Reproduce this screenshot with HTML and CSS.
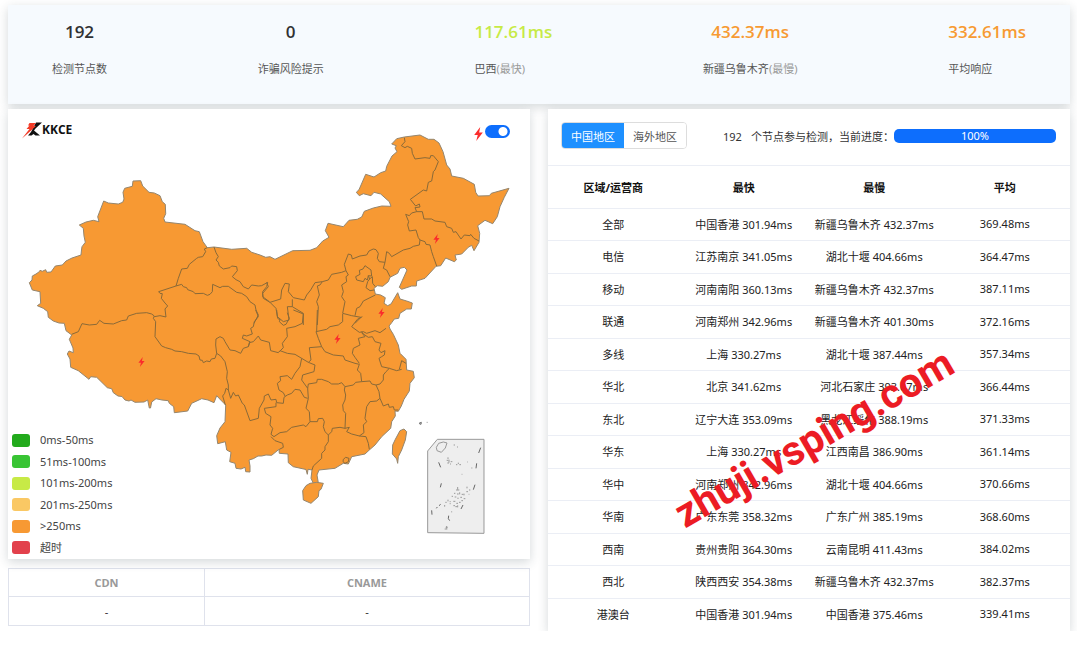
FILE: index.html
```html
<!DOCTYPE html>
<html lang="zh-CN">
<head>
  <meta charset="UTF-8" />
  <meta name="viewport" content="width=device-width, initial-scale=1.0" />
  <title>KKCE</title>
  <link rel="stylesheet" href="styles.css">
</head>
<body>
  <svg width="0" height="0" class="defs">
    <symbol id="bolt" viewBox="0 0 8 13"><path d="M5.6 0 0 7.4h3.3L1.9 13 8 5.2H4.6z" /></symbol>
  </svg>

  <div class="card stats">
    <div class="stat"><div class="value">192</div><div class="label">检测节点数</div></div>
    <div class="stat"><div class="value">0</div><div class="label">诈骗风险提示</div></div>
    <div class="stat"><div class="value lime">117.61ms</div><div class="label">巴西<span>(最快)</span></div></div>
    <div class="stat"><div class="value orange">432.37ms</div><div class="label">新疆乌鲁木齐<span>(最慢)</span></div></div>
    <div class="stat"><div class="value orange">332.61ms</div><div class="label">平均响应</div></div>
  </div>

  <div class="columns">
    <div class="left">
      <div class="card map-card">
        <svg class="map" viewBox="8 109 522 450">
          <path class="land" d="M29.3 282.7 32 280 32.3 276 36 274 39.3 271.7 40 270.3 42.3 271.3 45.7 269.7 46.7 272.3 51 272 55.3 266 62.3 265 66 261 72 258 81 255 81.500 250 82 246.700 85.300 242.300 84 236 83.300 228.300 79.300 225 86 222 93.300 220.300 99 221.700 97.700 216.700 103.700 201 108.300 203 118.300 204 122.700 202.300 124 199 123 192.300 124.700 188.300 132.300 186.300 133 181 140.700 180.700 142.700 186 149 192.300 154.300 193 160 195.700 162.300 201.700 165.300 204.300 165.700 213.700 163.700 218.300 165 222 185 224.300 195 230.700 199.300 231.700 203 241.700 207.300 247.700 214 247 231.700 249.300 246.700 248.300 251.700 252.300 260 255 265.700 257.300 270 256.700 275 259.300 292.700 250.700 310 250.300 316.700 247.700 322.700 241 329 237.300 325.300 230.700 328 223.300 343.300 226.700 349 220.300 357.300 219.300 361.700 217 364.300 211.300 373.300 208 381.700 206 391 206.300 389.300 201.700 380.700 194 374 192.300 371 195.700 363.300 193.700 359.300 195.700 356.300 192.300 359 189.700 365.700 174.300 374 177 380.700 172.700 385.700 171 386.700 166.300 392 156 397 151.700 395 148 396.300 145.700 391.700 144 396.700 138.700 404.300 137 420 135 428.300 139.300 434 139.300 439 143 443 151.700 446.700 165 450 169 451.700 176 463.300 178.300 474.300 184.300 475.700 192.300 478 196 489.300 195.700 491.300 193.300 509 188.300 504.300 197.300 500 206.700 497.300 216.700 492.700 223.700 485 220.300 477.700 225.700 479.700 233.300 479 242.300 474 250.700 471.700 245.300 468.300 247.300 461.700 254 455 255 456.300 260 454.300 261.700 445.700 258 440.700 265.700 436 266.300 425 278.300 416.700 281 416.300 286 411.700 286 401.700 289.300 399.300 287.300 407 270 404.300 267.300 400 268.300 397.700 273.300 390 277.300 388.300 281.700 382.700 286.300 377.300 285.700 374 288.300 375.300 294 380.700 295 385.300 297.700 384 303.300 387.700 305.700 391 304 397.700 292.700 400 299 406.700 301 412.300 303 411.300 309 406.700 309 400 313.300 398.700 318.300 394.300 319 391.700 322.700 389 326 390 329 393.300 334.300 398.300 345 400 353.300 406 359.300 406.700 370 413.300 371.300 414.300 377.700 410 383.300 409.300 391 404 399.300 401.300 406 398.300 411.300 395 411 395.300 416 391.700 421.700 390.700 428.300 381.700 436.700 375 445 369.300 450 365 454 351.700 456.700 348.300 464 343.300 463.300 335 468.300 319 470 317 475 318.300 482.700 313.300 483.300 311 478.300 312 470 308 469.300 307.300 474.300 306 469.500 293.300 466.700 288.300 462.700 288 454 279.300 453.300 279 449.300 271.700 455.300 266 455 261.700 456 258 456 253.300 458.700 249 460 250 466 250 472 245.700 471.700 245 467.300 241 469 236 468.300 235 463.300 229.700 461.700 231 452.300 226.700 450 225.300 441.700 217.700 443.700 216.700 435.700 220 428 225 421.700 225.700 405 220.700 400 216.700 395.700 214 402.700 208 400 201.700 398.700 191.700 403.300 187.700 411 174.300 412.700 173.700 406.700 169.300 403.300 168.300 400.700 162 400 156 398.700 151.700 402 150.500 408 149.300 408 147.700 400 144 402 135 402.300 131 400 129 401 125 400 122 396.500 118 396 113.300 392.700 111.700 388.700 107.300 387.700 96.700 377.300 90.700 376.700 89 379.300 78.300 370.700 70.700 367.300 70 359 67.300 354 69 351 73.300 352.700 73 348 69.300 339.300 71.700 335 66 330.700 64.300 323.300 59 323 53.300 321 48.300 317.300 47.700 311.700 43.300 308.300 37.300 305.700 40.700 303.300 40 291.700 32.300 290z" />

          <!-- 西北 -->
          <g class="border" transform="translate(0 105) scale(.33333)">
            <path d="M622 428 613 432 617 440 608 455 595 457 590 460 568 478 562 490 545 492 535 520 528 543 476 560 480 565 487 566 484 580 495 594 503 603 495 612 498 636 480 632 463 635" />
            <path d="M528 543 545 538 550 545 560 548 563 554 580 560 585 566 610 565 622 571 630 568 637 560 638 538 660 548 668 544 685 544 710 562 725 565 740 575 750 590 765 600 768 615 775 630 762 655" />
            <path d="M642 426 648 443 655 455 648 465 655 472 658 483 670 492 690 488 695 483 710 485 712 497 697 515 708 524 720 530 730 545 745 552 755 540 775 543 785 542 803 532 800 545 788 560 788 575 808 590" />
          </g>

          <!-- 华北、东北 -->
          <g class="border" transform="translate(260 105) scale(.33333)">
            <path d="M20 532 25 545 8 565 10 580 30 592 62 582 65 555 75 535 88 537 85 560 100 578 133 585 140 570 152 555 165 533 187 530 205 525 215 508 245 502 258 497" />
            <path d="M30 592 48 610 52 635 70 650 87 645 82 605 97 605 97 583M97 605 130 625 130 660" />
            <path d="M187 530 180 540 172 543 178 570 170 590 175 605 172 660" />
            <path d="M258 497 265 510 258 515 260 530 245 540 250 560 245 575 255 590 248 625 275 632 303 637 285 655" />
            <path d="M285 632 290 610 300 605 310 588 346 570" />
            <path d="M258 497 253 478 265 447 274 450 277 462 300 453 320 450 327 438 340 432 348 434 355 445 352 460 358 470 375 472 370 490 380 495 390 515" />
            <path d="M375 472 380 440 388 445 395 455 430 435 450 430 460 424 478 420 480 405 495 410 498 418 510 420 515 440 520 455 530 483" />
            <path d="M480 405 475 398 468 375 448 378 443 360 446 350 437 328 448 332 455 324 470 320 465 308 480 306 478 297 467 303 451 283 490 255 500 258 505 232 515 228 520 200 525 195 535 170 520 152 512 152 510 160 495 158 465 162 457 145 455 130 442 124 435 128 424 122 435 110 433 98" />
            <path d="M470 320 487 320 492 342 515 342 525 348 555 352 560 365 575 370 580 382 588 380 603 402 613 390 630 392 632 388 642 400 657 408" />
            <path d="M287 515 300 508 298 496 309 492 315 482 333 495 335 513 325 512 322 525 315 520 310 530 290 525z" />
            <path d="M325 512 329 522 323 530 318 548 330 557 342 555M329 522 337 515 338 535 346 545" />
          </g>

          <!-- 西藏 -->
          <g class="border" transform="translate(0 310) scale(.33333)">
            <path d="M463 18 455 12 440 8 410 10 385 18 380 30 365 32 340 42 312 40 299 31 290 43 268 45 246 41 235 65 215 73" />
            <path d="M463 18 460 25 467 35 465 80 485 108 497 113 515 118 525 123 545 125 565 130 588 132 597 138 600 150 607 151 610 158 620 153 630 155 634 147 645 145 650 130" />
          </g>

          <!-- 南方各省 -->
          <g class="border" transform="translate(200 310) scale(.33333)">
            <path d="M167 0 175 20 163 35 160 50 152 55 157 72 140 78 130 75 127 85 150 95 145 110 130 115 122 130 105 122 90 120 75 95 70 85 60 80 48 87 47 105 50 130 62 138 75 155 82 185 80 205 85 225 85 240 78 235 74 250 68 258 76 285" />
            <path d="M145 110 148 98 160 95 175 78 182 90 208 97 212 122 235 128 240 122 262 130 285 133 305 145 325 157 333 150 328 113 365 110" />
            <path d="M230 0 233 25 240 30 238 35 250 46 258 43 268 25 262 8M280 0 310 12 307 40 285 50 260 55 262 80 247 100 250 113 238 125" />
            <path d="M85 240 92 265 100 247 107 258 115 255 127 280 133 285 150 332 175 325 178 295 192 270 193 258 205 252 213 270 228 268 230 278 250 280 252 262 262 255 275 250 285 238 300 240 313 262 323 265" />
            <path d="M305 145 300 170 285 190 275 208 262 197 240 200 242 212 232 220 237 240 250 248 255 258" />
            <path d="M325 157 345 165 342 185 308 195 305 210 323 235 325 265 318 295 328 305 330 335 318 350 310 345 275 352 260 365 240 368 222 380 213 373 218 355 210 345 213 320 197 310 193 295 228 290 228 278" />
            <path d="M213 380 225 392 248 400 250 412 238 418M330 335 352 335 355 326 368 325 373 335 370 350 375 365 385 375 385 395 375 410 375 420 365 430 365 445 340 468 336 480" />
            <path d="M385 375 395 365 397 355 420 352 435 355 448 352 440 365 455 372 478 378 492 368 490 345 500 335 495 325 500 290 510 275 530 273 540 265 550 288 565 282 568 292 580 290 583 300 595 300" />
            <path d="M323 235 325 222 350 218 352 208 365 208 385 215 395 222 415 222 425 218 435 230 433 240 437 255 435 270 428 285 430 302 437 310 435 355" />
            <path d="M435 230 460 225 467 217 485 215 510 213 515 222 528 225 537 245 540 265M528 225 540 222 550 210 550 195 558 185 568 175 590 182 605 178M598 178 605 152 618 160" />
            <path d="M568 175 545 170 537 145 545 140 553 135 555 122 543 128 537 120 543 100 525 95 517 80 505 82 490 72 485 65" />
            <path d="M455 50 478 67 490 65 500 70 525 62 540 68 558 55M478 378 498 380 505 400 508 418M487 20 472 28 455 50" />
            <path d="M485 68 495 80 475 85 480 105 460 115 457 130 465 142 478 160M365 110 375 125 400 135 430 138 435 150 450 155 465 160 478 163 472 180 482 190 485 215" />
            <path d="M428 12 428 35 415 45 390 50 380 58 348 65 355 85 365 110M352 0 350 65" />
            <path d="M430 448 437 442 447 445 445 455 435 460 429 455z" />
          </g>
          <g class="land" transform="translate(200 310) scale(.33333)">
            <path d="M318 527 330 520 350 517 370 520 363 538 357 542 355 560 333 580 310 570 308 542z" />
            <path d="M600 362 612 357 620 365 616 390 605 420 595 440 593 460 590 447 577 432 578 405 586 388z" />
          </g>

          <!-- 南海诸岛 -->
          <g transform="translate(380 340) scale(.33333)">
            <path class="inset" d="M143 333 172 298H312V580L143 578z" />
            <path class="inset" d="M176 310 190 306 201 309 196 324 184 337 171 332 169 322z" />
            <path class="reef" d="M302 323 296 339M176 367 182 382M290 370 288 385M184 430 181 442M285 434 280 449M155 511 156 524M249 495 243 507M206 527 205 536 209 542M182 493 177 497M172 501 169 505M117 250 124 247 123 253 118 251" />
            <path class="spots" d="M221 315h4M231 321h3M204 352v5M200 361h5M207 359v9M212 365h5M202 369h5M210 372h3M228 374h4M235 368v4M238 374h5M262 366h2M274 384h3M245 403h2M233 441v8M228 450h10M261 440v5M267 450h4M259 455h5M222 460h4M231 462h5M239 457v6M245 463h5M252 461v5M215 469h4M224 471h5M234 473v4M241 472h5M251 476h5M204 479v5M196 487h4M209 485h3M220 484h6M229 490h5M237 487h5M194 495v5M220 497h5M226 500h6M233 496v6M215 514v3M197 562h6M200 558v8M194 567h8M140 247h3M209 491h3M244 482h5M266 463h2" />
          </g>

          <g class="bolt">
            <use href="#bolt" x="433" y="234" width="7" height="10" />
            <use href="#bolt" x="378" y="308" width="7" height="10" />
            <use href="#bolt" x="334" y="334" width="7" height="10" />
            <use href="#bolt" x="138" y="357" width="7" height="10" />
          </g>
        </svg>

        <a class="logo" href="#">
          <svg viewBox="0 0 20 17" width="20" height="17">
            <path class="ink" d="M14 .5h6L13.500 6.500 12 8.500 18 13.500H13.500L11.500 12 9.500 13.500H6L9 10z" />
            <path class="red" d="M7.500 1H14L11.500 4H14L8 9.500 0 16.500 5.500 9.500 7.500 7H4.500L7.500 3.500H6z" />
          </svg>
          <span>KKCE</span>
        </a>
        <label class="toggle">
          <svg class="bolt" width="9" height="14"><use href="#bolt" /></svg>
          <input type="checkbox" aria-label="动画" checked />
        </label>
        <ul class="legend">
          <li><i class="c50"></i>0ms-50ms</li>
          <li><i class="c100"></i>51ms-100ms</li>
          <li><i class="c200"></i>101ms-200ms</li>
          <li><i class="c250"></i>201ms-250ms</li>
          <li><i class="c251"></i>&gt;250ms</li>
          <li><i class="timeout"></i>超时</li>
        </ul>
      </div>

      <table class="cdn">
        <thead><tr><th>CDN</th><th>CNAME</th></tr></thead>
        <tbody><tr><td>-</td><td>-</td></tr></tbody>
      </table>
    </div>

    <div class="card right">
      <div class="toolbar">
        <div class="tabs">
          <button class="active">中国地区</button><button>海外地区</button>
        </div>
        <div class="note"><span>192</span>个节点参与检测，当前进度：</div>
        <div class="progress">100%</div>
      </div>
      <table class="result">
        <thead><tr><th>区域/运营商</th><th>最快</th><th>最慢</th><th>平均</th></tr></thead>
        <tbody>
          <tr><td>全部</td><td>中国香港 301.94ms</td><td>新疆乌鲁木齐 432.37ms</td><td>369.48ms</td></tr>
          <tr><td>电信</td><td>江苏南京 341.05ms</td><td>湖北十堰 404.66ms</td><td>364.47ms</td></tr>
          <tr><td>移动</td><td>河南南阳 360.13ms</td><td>新疆乌鲁木齐 432.37ms</td><td>387.11ms</td></tr>
          <tr><td>联通</td><td>河南郑州 342.96ms</td><td>新疆乌鲁木齐 401.30ms</td><td>372.16ms</td></tr>
          <tr><td>多线</td><td>上海 330.27ms</td><td>湖北十堰 387.44ms</td><td>357.34ms</td></tr>
          <tr><td>华北</td><td>北京 341.62ms</td><td>河北石家庄 393.07ms</td><td>366.44ms</td></tr>
          <tr><td>东北</td><td>辽宁大连 353.09ms</td><td>黑龙江绥化 388.19ms</td><td>371.33ms</td></tr>
          <tr><td>华东</td><td>上海 330.27ms</td><td>江西南昌 386.90ms</td><td>361.14ms</td></tr>
          <tr><td>华中</td><td>河南郑州 342.96ms</td><td>湖北十堰 404.66ms</td><td>370.66ms</td></tr>
          <tr><td>华南</td><td>广东东莞 358.32ms</td><td>广东广州 385.19ms</td><td>368.60ms</td></tr>
          <tr><td>西南</td><td>贵州贵阳 364.30ms</td><td>云南昆明 411.43ms</td><td>384.02ms</td></tr>
          <tr><td>西北</td><td>陕西西安 354.38ms</td><td>新疆乌鲁木齐 432.37ms</td><td>382.37ms</td></tr>
          <tr><td>港澳台</td><td>中国香港 301.94ms</td><td>中国香港 375.46ms</td><td>339.41ms</td></tr>
        </tbody>
      </table>
      <div class="watermark">zhuji.vsping.com</div>
    </div>
  </div>
</body>
</html>
```
FILE: styles.css
```css
* { box-sizing: border-box; }
body {
  margin: 0;
  padding: 5px 7px 0 8px;
  font-family: "Noto Sans", "Noto Sans CJK SC", sans-serif;
  font-size: 11px;
  color: #333;
  background: #fff;
}
.defs { position: absolute; }
.card {
  background: #fff;
  box-shadow: 0 3px 10px rgba(40, 60, 70, 0.2);
}

/* 顶部统计 */
.stats {
  display: flex;
  justify-content: space-between;
  height: 99px;
  padding: 12px 44px;
  background: #f6fafe;
}
.value {
  height: 30px;
  line-height: 30px;
  font-family: "Open Sans", sans-serif;
  font-size: 17px;
  font-weight: 600;
  text-align: center;
  color: #303133;
}
.label {
  margin-top: 14px;
  line-height: 16px;
  color: #555;
}
.label span { color: #999; }
.value.lime { color: #c7ea46; }
.value.orange { color: #f79a33; }

.columns {
  display: grid;
  grid-template-columns: 1fr 1fr;
  gap: 18px;
  align-items: start;
  margin-top: 5px;
}

/* 地图 */
.map-card { position: relative; }
.map { display: block; width: 100%; }
.land, .land path, .border path, .inset, .reef, .spots { vector-effect: non-scaling-stroke; }
.land, .land path {
  fill: #f79933;
  stroke: #94866f;
  stroke-width: 1;
  stroke-linejoin: round;
}
.border path {
  fill: none;
  stroke: #8a6a38;
  stroke-width: 1;
  stroke-linejoin: round;
}
.inset { fill: #eee; stroke: #999; }
.reef { fill: none; stroke: #666; }
.spots { fill: none; stroke: #999; }
.bolt { fill: #fb2c2c; }
.logo {
  position: absolute;
  left: 14px;
  top: 13px;
  display: flex;
  color: #111;
  font-family: "Open Sans", sans-serif;
  font-size: 12px;
  font-weight: 700;
  line-height: 15px;
  text-decoration: none;
}
.ink { fill: #111; }
.red { fill: #f23a26; }
.toggle {
  position: absolute;
  right: 20px;
  top: 16px;
  display: flex;
  gap: 2px;
}
.toggle .bolt { margin-top: 2px; }
.toggle input {
  appearance: none;
  width: 25px;
  height: 13px;
  margin: 0;
  border-radius: 7px;
  background: radial-gradient(circle at 18px 50%, #fff 4px, #0d6efd 5px);
}
.legend {
  position: absolute;
  left: 4px;
  bottom: 2px;
  display: flex;
  flex-direction: column;
  justify-content: space-between;
  height: 126px;
  margin: 0;
  padding: 0;
  list-style: none;
  font-size: 11px;
  color: #444;
}
.legend li {
  display: flex;
  align-items: center;
  gap: 10px;
  line-height: 18px;
}
.legend i {
  width: 18px;
  height: 13px;
  border-radius: 3px;
}
.c50 { background: #22aa1c; }
.c100 { background: #38c434; }
.c200 { background: #c7ea46; }
.c250 { background: #fac864; }
.c251 { background: #f79933; }
.timeout { background: #e2414c; }

/* CDN */
.cdn {
  width: 100%;
  margin-top: 9px;
  border-collapse: collapse;
  table-layout: fixed;
  text-align: center;
}
.cdn th, .cdn td {
  height: 29px;
  padding: 0;
  border: 1px solid #dfe2ec;
}
.cdn th {
  height: 28px;
  color: #999;
  font-family: "Open Sans", sans-serif;
  font-weight: 700;
}
.cdn th:first-child { width: 37.6%; }

/* 右侧结果 */
.right { position: relative; }
.toolbar {
  display: flex;
  align-items: center;
  height: 56px;
  padding: 0 14px 3px 13px;
}
.tabs {
  display: flex;
  border: 1px solid #ddd;
  border-radius: 4px;
  overflow: hidden;
}
.tabs button {
  height: 25px;
  padding: 0 9px;
  border: 0;
  background: #fff;
  color: #555;
  font: inherit;
  cursor: pointer;
}
.tabs .active { background: #1e90ff; color: #fff; }
.note {
  margin-left: 36px;
  white-space: nowrap;
}
.note span { margin-right: 9px; }
.progress {
  flex: 1;
  height: 14px;
  border-radius: 5px;
  background: #0d6efd;
  color: #fff;
  line-height: 14px;
  text-align: center;
}
.result {
  width: 100%;
  border-collapse: collapse;
  table-layout: fixed;
  text-align: center;
  color: #222;
}
.result th, .result td {
  padding: 0;
  border-top: 1px solid #ebeef5;
}
.result th {
  height: 43px;
  color: #111;
}
.result td {
  height: 32px;
  padding-bottom: 2px;
  white-space: nowrap;
}
.result tr:nth-child(even) td { height: 33px; }
.watermark {
  position: absolute;
  left: 51%;
  top: 63%;
  transform: translate(-50%, -50%) rotate(-30deg);
  color: #ec1c24;
  font-family: Roboto, sans-serif;
  font-size: 41px;
  font-weight: 700;
  line-height: 46px;
  white-space: nowrap;
  pointer-events: none;
}
```
